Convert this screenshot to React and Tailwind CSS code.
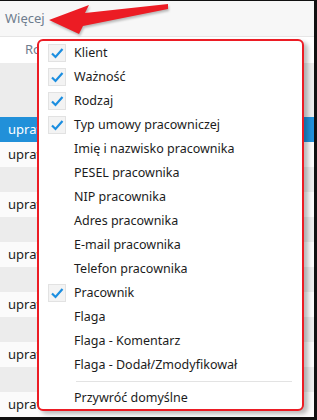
import { useState } from "react";

const columns = [
  { label: "Klient", checked: true },
  { label: "Ważność", checked: true },
  { label: "Rodzaj", checked: true },
  { label: "Typ umowy pracowniczej", checked: true },
  { label: "Imię i nazwisko pracownika", checked: false },
  { label: "PESEL pracownika", checked: false },
  { label: "NIP pracownika", checked: false },
  { label: "Adres pracownika", checked: false },
  { label: "E-mail pracownika", checked: false },
  { label: "Telefon pracownika", checked: false },
  { label: "Pracownik", checked: true },
  { label: "Flaga", checked: false },
  { label: "Flaga - Komentarz", checked: false },
  { label: "Flaga - Dodał/Zmodyfikował", checked: false },
];

// background grid rows: "text" rows are white, "empty" rows are grey
const rows = ["sel", "text", "empty", "text", "empty", "text", "empty", "text", "empty", "text", "empty", "text"];

export default function App() {
  const [items, setItems] = useState(columns);

  const toggle = (i) =>
    setItems((prev) => prev.map((it, idx) => (idx === i ? { ...it, checked: !it.checked } : it)));

  return (
    <div className="relative w-[317px] h-[420px] overflow-hidden bg-white font-['Noto_Sans',sans-serif] text-[13px] border-t border-r-[3px] border-b-[3px] border-[#111]">
      {/* Toolbar */}
      <div className="h-[36px] bg-[#f7f7f7] flex items-center pl-[5px] text-[#6f7d8e] border-b border-[#e6e6e6]">
        Więcej
      </div>

      {/* Grid header */}
      <div className="h-[26px] bg-white flex items-center pl-[25px] text-[#6f7d8e]">Rodzaj</div>

      {/* Filter band */}
      <div className="h-[54px] bg-[#ececec]" />

      {/* Grid rows */}
      <div className="flex flex-col">
        {rows.map((r, i) => (
          <div
            key={i}
            className={
              r === "sel"
                ? "h-[25px] bg-[#2190d9] text-white flex items-center pl-[8px]"
                : r === "text"
                ? "h-[25px] bg-[#fbfbfb] text-[#1c1c1c] flex items-center pl-[8px]"
                : "h-[25px] bg-[#ececec]"
            }
          >
            {r !== "empty" && "uprawnienia"}
          </div>
        ))}
      </div>

      {/* Arrow annotation */}
      <svg className="absolute left-0 top-0" width="317" height="40" viewBox="0 0 317 40">
        <path
          d="M49 19 L89 4 L85 12 L168 3 L168 8 L83 25 L79 33 Z"
          fill="#ec1c24"
          style={{ filter: "drop-shadow(1px 2px 1px rgba(0,0,0,0.25))" }}
        />
      </svg>

      {/* Column chooser menu */}
      <div className="absolute left-[37px] top-[38px] w-[267px] h-[372px] bg-white border-2 border-[#ec1c24] rounded-[6px] shadow-[4px_3px_4px_rgba(0,0,0,0.25)] text-[#1c1c1c] text-[12.5px]">
        {items.map((it, i) => (
          <button
            key={it.label}
            onClick={() => toggle(i)}
            className="w-full h-[24px] flex items-center text-left"
          >
            <span className="w-[35px] flex items-center pl-[9px]">
              {it.checked && (
                <span className="w-[18px] h-[18px] bg-[#f3f3f3] border border-[#e2e2e2] flex items-center justify-center">
                  <svg width="14" height="12" viewBox="0 0 14 12">
                    <path d="M2 6.5 L5.5 10 L12.5 2" fill="none" stroke="#1b8ee0" strokeWidth="2.2" />
                  </svg>
                </span>
              )}
            </span>
            <span>{it.label}</span>
          </button>
        ))}
        <div className="ml-[37px] mr-[10px] my-[4px] h-px bg-[#e3e3e3]" />
        <button className="w-full h-[24px] flex items-center pl-[35px] text-left">Przywróć domyślne</button>
      </div>
    </div>
  );
}
